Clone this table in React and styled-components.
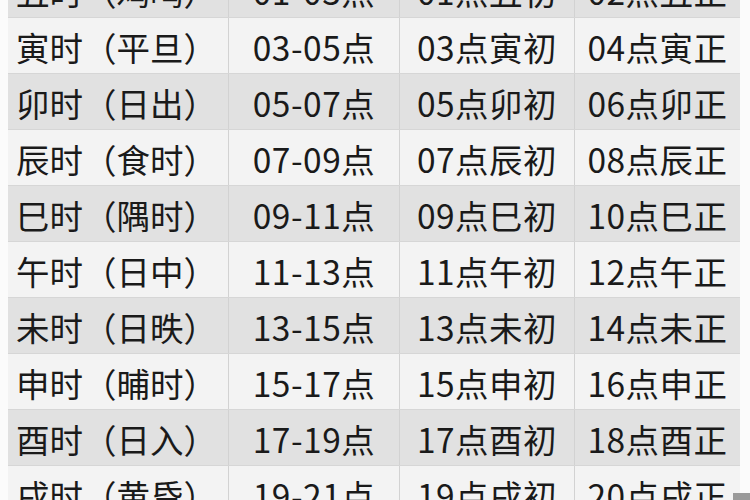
import React from 'react';
import styled, { createGlobalStyle } from 'styled-components';

const GlobalStyle = createGlobalStyle`
  html, body {
    margin: 0;
    padding: 0;
    background: #fbfbfb;
  }
`;

const Viewport = styled.div`
  position: relative;
  width: 750px;
  height: 500px;
  overflow: hidden;
  background: #fbfbfb;
  padding-left: 8px;
  box-sizing: border-box;
`;

const Table = styled.div`
  width: 732px;
  margin-top: -38px;
  display: flex;
  flex-direction: column;
  font-family: "Noto Sans CJK SC", "Noto Sans", sans-serif;
  color: #1a1a1a;
`;

const Row = styled.div`
  display: grid;
  grid-template-columns: 221px 171px 175px 165px;
  height: 56px;
  background: ${(p) => (p.$dark ? '#e1e1e1' : '#f3f3f3')};
  border-bottom: 1px solid #d6d6d6;
  box-sizing: border-box;
`;

const Cell = styled.div`
  display: flex;
  align-items: center;
  justify-content: ${(p) => (p.$lead ? 'flex-start' : 'center')};
  padding-left: ${(p) => (p.$lead ? '8px' : '0')};
  font-size: 33.5px;
  line-height: 1;
  white-space: nowrap;
  border-right: 1px solid #d2d2d2;
  letter-spacing: ${(p) => (p.$lead ? '0' : '0.5px')};
  padding-top: 3px;
  box-sizing: border-box;

  &:last-child {
    border-right: none;
  }
`;

const Mark = styled.div`
  position: absolute;
  right: 0;
  bottom: 0;
  width: 17px;
  height: 7px;
  background: #9a9a9a;
`;

const rows = [
  ['丑时（鸡鸣）', '01-03点', '01点丑初', '02点丑正'],
  ['寅时（平旦）', '03-05点', '03点寅初', '04点寅正'],
  ['卯时（日出）', '05-07点', '05点卯初', '06点卯正'],
  ['辰时（食时）', '07-09点', '07点辰初', '08点辰正'],
  ['巳时（隅时）', '09-11点', '09点巳初', '10点巳正'],
  ['午时（日中）', '11-13点', '11点午初', '12点午正'],
  ['未时（日昳）', '13-15点', '13点未初', '14点未正'],
  ['申时（晡时）', '15-17点', '15点申初', '16点申正'],
  ['酉时（日入）', '17-19点', '17点酉初', '18点酉正'],
  ['戌时（黄昏）', '19-21点', '19点戌初', '20点戌正'],
];

const App = () => (
  <>
    <GlobalStyle />
    <Viewport>
      <Table>
        {rows.map((r, i) => (
          <Row key={i} $dark={i % 2 === 0}>
            {r.map((c, j) => (
              <Cell key={j} $lead={j === 0}>{c}</Cell>
            ))}
          </Row>
        ))}
      </Table>
      <Mark />
    </Viewport>
  </>
);

export default App;
